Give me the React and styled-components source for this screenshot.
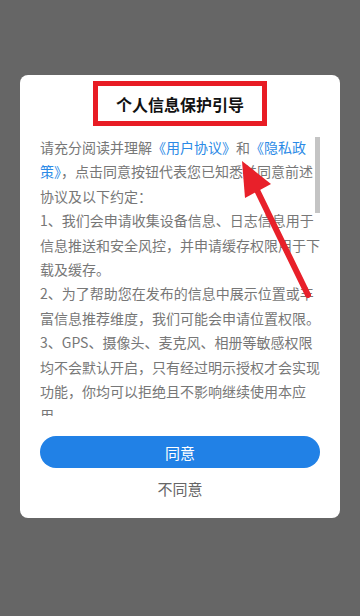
import React from "react";
import styled, { createGlobalStyle } from "styled-components";

const GlobalStyle = createGlobalStyle`
  html, body {
    margin: 0;
    padding: 0;
    background: #666666;
  }
  body {
    font-family: "Noto Sans CJK SC", "Noto Sans", sans-serif;
  }
`;

const Screen = styled.div`
  position: relative;
  width: 360px;
  height: 616px;
  padding-top: 75px;
  box-sizing: border-box;
  background: #666666;
`;

const Dialog = styled.div`
  width: 320px;
  height: 443px;
  margin: 0 auto;
  background: #ffffff;
  border-radius: 8px;
  box-sizing: border-box;
  padding: 6px 20px 0;
  display: flex;
  flex-direction: column;
  align-items: center;
`;

const Title = styled.h2`
  margin: 0;
  width: 174px;
  height: 45px;
  box-sizing: border-box;
  border: 5px solid #e81c24;
  display: flex;
  align-items: center;
  justify-content: center;
  font-size: 16px;
  font-weight: 700;
  color: #111111;
`;

const ScrollArea = styled.div`
  position: relative;
  margin-top: 9px;
  width: 280px;
  height: 281px;
  overflow: hidden;
`;

const Body = styled.div`
  font-size: 14px;
  line-height: 24.4px;
  color: #777777;
  line-break: strict;

  p {
    margin: 0;
  }
`;

const Link = styled.span`
  color: #2b8ae6;
`;

const Thumb = styled.div`
  position: absolute;
  top: 2px;
  right: 0;
  width: 5px;
  height: 76px;
  background: #c4c4c4;
`;

const Button = styled.button`
  margin-top: 20px;
  width: 280px;
  height: 32px;
  border: none;
  border-radius: 16px;
  background: ${({ $primary }) => ($primary ? "#2181e6" : "transparent")};
  color: ${({ $primary }) => ($primary ? "#ffffff" : "#666666")};
  font-family: inherit;
  font-size: 15px;
  padding: 0;
`;

const GhostButton = styled(Button)`
  margin-top: 4px;
`;

const Arrow = styled.svg`
  position: absolute;
  left: 0;
  top: 0;
  pointer-events: none;
`;

export default function App() {
  return (
    <Screen>
      <GlobalStyle />
      <Dialog>
        <Title>个人信息保护引导</Title>
        <ScrollArea>
          <Body>
            <p>
              请充分阅读并理解<Link>《用户协议》</Link>和
              <Link>《隐私政策》</Link>
              ，点击同意按钮代表您已知悉并同意前述协议及以下约定：
            </p>
            <p>
              1、我们会申请收集设备信息、日志信息用于信息推送和安全风控，并申请缓存权限用于下载及缓存。
            </p>
            <p>
              2、为了帮助您在发布的信息中展示位置或丰富信息推荐维度，我们可能会申请位置权限。
            </p>
            <p>
              3、GPS、摄像头、麦克风、相册等敏感权限均不会默认开启，只有经过明示授权才会实现功能，你均可以拒绝且不影响继续使用本应用。
            </p>
          </Body>
          <Thumb />
        </ScrollArea>
        <Button $primary>同意</Button>
        <GhostButton>不同意</GhostButton>
      </Dialog>
      <Arrow width="360" height="616" viewBox="0 0 360 616">
        <line
          x1="308"
          y1="295"
          x2="256"
          y2="188"
          stroke="#e8202a"
          strokeWidth="6"
          strokeLinecap="round"
        />
        <polygon points="242,161 245,198 271,184" fill="#e8202a" />
      </Arrow>
    </Screen>
  );
}
